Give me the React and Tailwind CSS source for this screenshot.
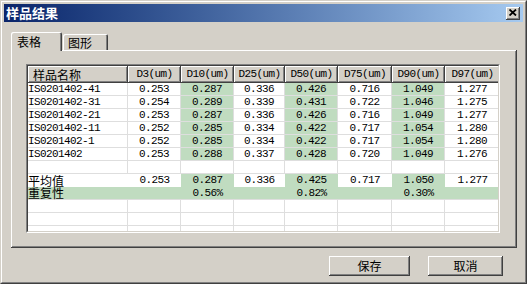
const mono = "font-['Liberation_Mono','Noto_Sans_CJK_SC',monospace] text-[11px] tracking-[-0.6px]";
const cjk = "font-['Noto_Sans_CJK_SC',sans-serif] text-[12px]";
const raised = "shadow-[inset_-1px_-1px_#404040,inset_1px_1px_#ffffff,inset_-2px_-2px_#808080]";

const cols = [
  { label: "D3(um)", w: "w-[53px]", hl: false },
  { label: "D10(um)", w: "w-[53px]", hl: true },
  { label: "D25(um)", w: "w-[51px]", hl: false },
  { label: "D50(um)", w: "w-[53px]", hl: true },
  { label: "D75(um)", w: "w-[54px]", hl: false },
  { label: "D90(um)", w: "w-[53px]", hl: true },
  { label: "D97(um)", w: "w-[55px]", hl: false },
];

const rows = [
  { name: "IS0201402-41", vals: ["0.253", "0.287", "0.336", "0.426", "0.716", "1.049", "1.277"] },
  { name: "IS0201402-31", vals: ["0.254", "0.289", "0.339", "0.431", "0.722", "1.046", "1.275"] },
  { name: "IS0201402-21", vals: ["0.253", "0.287", "0.336", "0.426", "0.716", "1.049", "1.277"] },
  { name: "IS0201402-11", vals: ["0.252", "0.285", "0.334", "0.422", "0.717", "1.054", "1.280"] },
  { name: "IS0201402-1", vals: ["0.252", "0.285", "0.334", "0.422", "0.717", "1.054", "1.280"] },
  { name: "IS0201402", vals: ["0.253", "0.288", "0.337", "0.428", "0.720", "1.049", "1.276"] },
];

const avg = ["0.253", "0.287", "0.336", "0.425", "0.717", "1.050", "1.277"];
const rep = ["", "0.56%", "", "0.82%", "", "0.30%", ""];

function GridRow({ name, vals, green, empty }) {
  // normal grid row: white cells with light lines, highlighted columns green
  return (
    <div className="flex h-[13px] leading-[12px] shrink-0">
      <div className={`w-[100px] shrink-0 bg-white border-r border-b border-[#dedede] ${mono}`}>{name}</div>
      {cols.map((c, i) => (
        <div
          key={c.label}
          className={`${c.w} shrink-0 text-center border-r border-b border-[#dedede] ${mono} ${
            c.hl && green ? "bg-[#c0dcc0]" : "bg-white"
          }`}
        >
          {empty ? "" : vals[i]}
        </div>
      ))}
    </div>
  );
}

export default function App() {
  return (
    <div className="w-[528px] h-[288px] bg-white">
      <div className="w-[527px] h-[284px] flex border border-t-[#d4d0c8] border-l-[#d4d0c8] border-r-[#404040] border-b-[#404040]">
        <div className="flex-1 flex flex-col p-[2px] bg-[#d4d0c8] border border-t-white border-l-white border-r-[#808080] border-b-[#808080]">
          {/* title bar */}
          <div className="h-[18px] shrink-0 flex items-center justify-between bg-linear-to-r from-[#0a246a] to-[#a6caf0] pl-[2px] pr-[3px]">
            <span className="text-white font-bold text-[13px] leading-[18px] font-['Noto_Sans_CJK_SC',sans-serif]">样品结果</span>
            <div className={`w-[14px] h-[13px] bg-[#d4d0c8] flex items-center justify-center ${raised}`}>
              <svg width="8" height="7" viewBox="0 0 8 7" className="-mt-[1px] -ml-[1px]">
                <path d="M0.5 0.5 L7 6.5 M7 0.5 L0.5 6.5" stroke="#000" strokeWidth="1.8" fill="none" />
              </svg>
            </div>
          </div>

          {/* tabs */}
          <div className="mt-[10px] ml-[7px] flex items-end h-[19px] -mb-[1px] relative z-10 shrink-0">
            <div className={`w-[51px] h-[19px] bg-[#d4d0c8] rounded-t-[2px] pl-[6px] pt-[3px] leading-[14px] ${cjk} shadow-[inset_1px_1px_#ffffff,inset_-1px_0_#404040,inset_-2px_0_#808080]`}>
              表格
            </div>
            <div className={`ml-[1px] mb-[1px] w-[45px] h-[16px] bg-[#d4d0c8] rounded-t-[2px] pl-[5px] pt-[2px] leading-[13px] ${cjk} shadow-[inset_1px_1px_#ffffff,inset_-1px_0_#404040,inset_-2px_0_#808080]`}>
              图形
            </div>
          </div>

          {/* tab panel */}
          <div className="ml-[7px] w-[506px] h-[198px] shrink-0 pl-[15px] pt-[14px] shadow-[inset_-1px_-1px_#404040,inset_1px_1px_#ffffff,inset_-2px_-2px_#808080]">
            <div className="w-[474px] h-[169px] border border-t-[#808080] border-l-[#808080] border-r-white border-b-white">
              <div className="w-full h-full overflow-hidden flex flex-col bg-[#d4d0c8] border border-t-[#404040] border-l-[#404040] border-r-[#d4d0c8] border-b-[#d4d0c8]">
                {/* header */}
                <div className="flex h-[17px] shrink-0 leading-[17px]">
                  <div className={`w-[100px] shrink-0 pl-[5px] bg-[#d4d0c8] ${cjk} ${raised}`}>样品名称</div>
                  {cols.map((c) => (
                    <div key={c.label} className={`${c.w} shrink-0 text-center bg-[#d4d0c8] ${mono} ${raised}`}>
                      {c.label}
                    </div>
                  ))}
                </div>

                {rows.map((r) => (
                  <GridRow key={r.name} name={r.name} vals={r.vals} green />
                ))}
                <GridRow name="" vals={[]} empty />

                {/* average */}
                <div className="flex h-[13px] leading-[13px] shrink-0 bg-white">
                  <div className={`w-[100px] shrink-0 ${cjk} leading-[13px]`}>平均值</div>
                  {cols.map((c, i) => (
                    <div key={c.label} className={`${c.w} shrink-0 text-center leading-[12px] ${mono} ${c.hl ? "bg-[#c0dcc0]" : "bg-white"}`}>
                      {avg[i]}
                    </div>
                  ))}
                </div>

                {/* repeatability */}
                <div className="flex h-[13px] leading-[12px] shrink-0 bg-[#c0dcc0] border-b border-[#dedede]">
                  <div className={`w-[100px] shrink-0 ${cjk} leading-[12px]`}>重复性</div>
                  {cols.map((c, i) => (
                    <div key={c.label} className={`${c.w} shrink-0 text-center ${mono}`}>
                      {rep[i]}
                    </div>
                  ))}
                </div>

                <GridRow name="" vals={[]} empty />
                <GridRow name="" vals={[]} empty />
                <GridRow name="" vals={[]} empty />
              </div>
            </div>
          </div>

          {/* buttons */}
          <div className="mt-[8px] flex justify-end gap-[18px] pr-[20px]">
            <div className={`w-[81px] h-[20px] flex items-center justify-center bg-[#d4d0c8] ${cjk} ${raised}`}>保存</div>
            <div className={`w-[75px] h-[20px] flex items-center justify-center bg-[#d4d0c8] ${cjk} ${raised}`}>取消</div>
          </div>
        </div>
      </div>
    </div>
  );
}
